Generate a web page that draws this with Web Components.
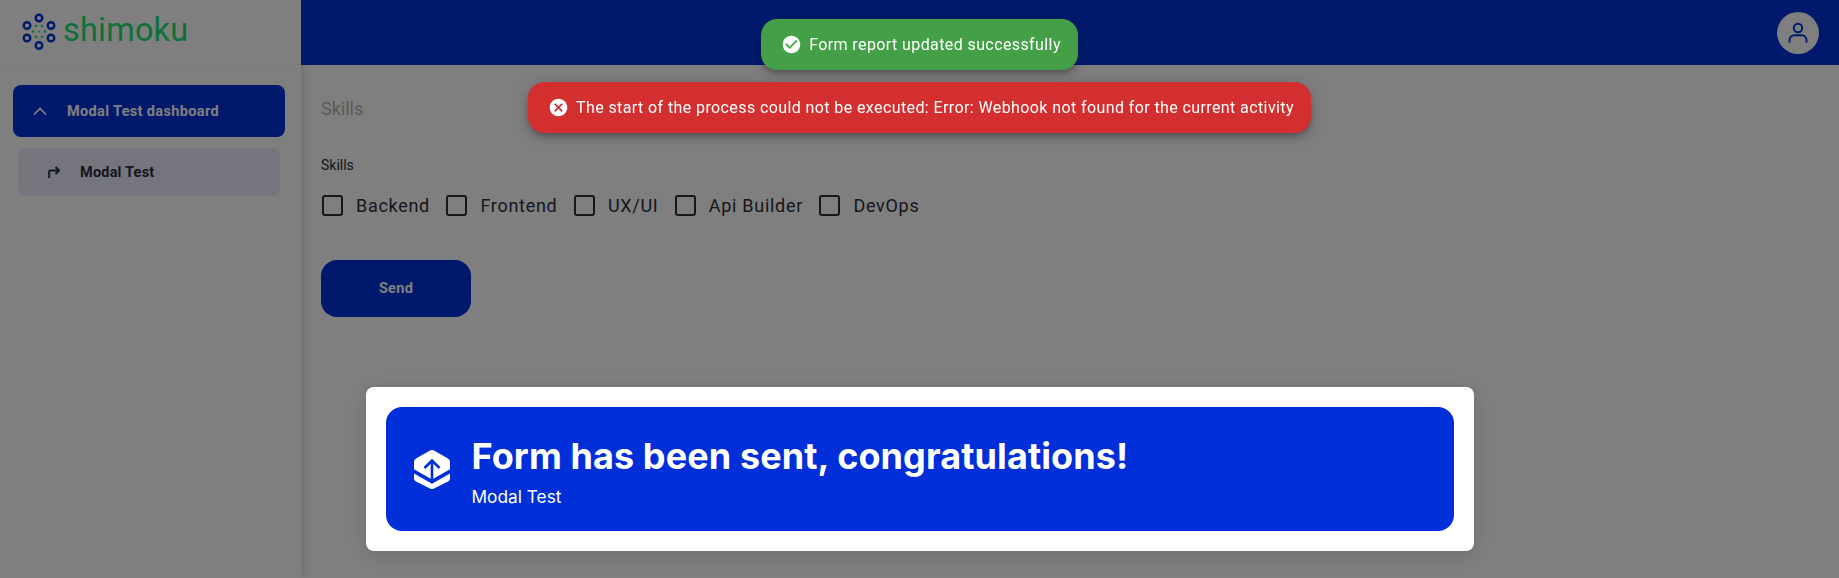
<!DOCTYPE html>
<html>
<head>
<meta charset="utf-8">
<title>Modal Test</title>
<style>
    html, body { margin: 0; height: 100%; overflow: hidden; background: #fff; }
    body { font-family: Roboto, "Liberation Sans", sans-serif; }
</style>
</head>
<body>
<app-shell>
    <shimoku-logo slot="logo"></shimoku-logo>
    <nav-group slot="nav" label="Modal Test dashboard">
        <nav-item label="Modal Test"></nav-item>
    </nav-group>
    <skills-form></skills-form>
</app-shell>

<modal-backdrop>
    <result-modal heading="Form has been sent, congratulations!" sub="Modal Test"></result-modal>
</modal-backdrop>

<toast-stack>
    <toast-msg kind="success">Form report updated successfully</toast-msg>
    <toast-msg kind="error">The start of the process could not be executed: Error: Webhook not found for the current activity</toast-msg>
</toast-stack>

<script>
class ShimokuLogo extends HTMLElement {
    constructor() {
        super();
        const root = this.attachShadow({mode: 'open'});
        root.innerHTML = `
        <style>
            :host { display: flex; align-items: center; gap: 7px; }
            span { font: 400 32.5px/1 "Roboto", sans-serif; color: #22e070; letter-spacing: .2px; position: relative; top: -2px; }
            svg { display: block; }
        </style>
        <svg width="34" height="38" viewBox="0 0 34 38" fill="none" stroke="#0033d9" stroke-width="2.4">
            <circle cx="17" cy="5" r="3.3"/>
            <circle cx="5" cy="12.5" r="3.3"/>
            <circle cx="29" cy="12.5" r="3.3"/>
            <circle cx="5" cy="25" r="3.3"/>
            <circle cx="29" cy="25" r="3.3"/>
            <circle cx="17" cy="32.5" r="3.3"/>
            <g fill="#22e070" stroke="none">
                <circle cx="14" cy="13" r="1.3"/><circle cx="20" cy="13" r="1.3"/>
                <circle cx="11" cy="18.5" r="1.3"/><circle cx="23" cy="18.5" r="1.3"/>
                <circle cx="14" cy="24" r="1.3"/><circle cx="20" cy="24" r="1.3"/>
                <circle cx="17" cy="18.5" r="1.1"/>
            </g>
        </svg>
        <span>shimoku</span>`;
    }
}

class NavGroup extends HTMLElement {
    constructor() {
        super();
        const root = this.attachShadow({mode: 'open'});
        root.innerHTML = `
        <style>
            :host { display: block; padding: 20px 16px 0 13px; }
            .head {
                height: 52px; border-radius: 8px; background: #0033d9; color: #fff;
                display: flex; align-items: center; padding-left: 20px; box-sizing: border-box;
                font: 700 14.5px Roboto, sans-serif; letter-spacing: .35px; gap: 20px;
            }
            svg { display: block; }
            .items { padding: 11px 5px 0; }
        </style>
        <div class="head">
            <svg width="14" height="8" viewBox="0 0 14 8" fill="none" stroke="#fff" stroke-width="1.6"><path d="M1 7.5 7 1.5l6 6"/></svg>
            <span>${this.getAttribute('label')}</span>
        </div>
        <div class="items"><slot></slot></div>`;
    }
}

class NavItem extends HTMLElement {
    constructor() {
        super();
        const root = this.attachShadow({mode: 'open'});
        root.innerHTML = `
        <style>
            :host {
                display: flex; align-items: center; height: 48px; border-radius: 8px;
                background: #e8ebfa; color: #2b2e3b; padding-left: 30px; box-sizing: border-box;
                font: 700 14.5px Roboto, sans-serif; letter-spacing: .2px; gap: 20px;
            }
            svg { display: block; }
        </style>
        <svg width="12" height="12" viewBox="0 0 12 12" fill="none" stroke="#2b2e3b" stroke-width="2"><path d="M1.2 12V5.800c0-.8.5-1.300 1.300-1.300h8"/><path d="M7.500 1 11 4.500 7.500 8"/></svg>
        <span>${this.getAttribute('label')}</span>`;
    }
}

class AppShell extends HTMLElement {
    constructor() {
        super();
        const root = this.attachShadow({mode: 'open'});
        root.innerHTML = `
        <style>
            :host { display: grid; grid-template-columns: 301px 1fr; height: 100vh; }
            aside { box-shadow: 2px 0 10px rgba(0,0,0,.14); position: relative; background: #fff; }
            .logo { height: 64px; border-bottom: 1px solid #f4f4f4; display: flex; align-items: center; padding-left: 22px; }
            header { height: 65px; background: #0033d9; display: flex; align-items: center; justify-content: flex-end; padding-right: 20px; }
            .avatar { width: 42px; height: 42px; border-radius: 50%; background: #fff; display: flex; align-items: center; justify-content: center; }
            svg { display: block; }
        </style>
        <aside>
            <div class="logo"><slot name="logo"></slot></div>
            <slot name="nav"></slot>
        </aside>
        <div>
            <header>
                <div class="avatar">
                    <svg width="20" height="22" viewBox="0 0 20 22" fill="none" stroke="#0033d9" stroke-width="2"><circle cx="10" cy="6" r="4.2"/><path d="M1.5 20.5v-2.2c0-3 2.4-5 5-5h7c2.6 0 5 2 5 5v2.2"/></svg>
                </div>
            </header>
            <slot></slot>
        </div>`;
    }
}

class CheckOption extends HTMLElement {
    constructor() {
        super();
        const root = this.attachShadow({mode: 'open'});
        root.innerHTML = `
        <style>
            :host { display: inline-flex; align-items: center; gap: 13px; font: 400 18px Roboto, sans-serif; letter-spacing: .7px; color: #2b2e3b; }
            i { display: block; width: 17px; height: 17px; border: 2px solid #2b2e3b; border-radius: 3px; }
        </style>
        <i></i><span><slot></slot></span>`;
    }
}

class SkillsForm extends HTMLElement {
    constructor() {
        super();
        const root = this.attachShadow({mode: 'open'});
        root.innerHTML = `
        <style>
            :host { display: block; padding: 33px 0 0 21px; }
            h2 { margin: 0 0 0 -1px; font: 400 18px/21px Roboto, sans-serif; color: #b4b4b4; }
            label { display: block; margin: 38px 0 0 -1px; font: 400 14px/16px Roboto, sans-serif; color: #2b2e3b; }
            .opts { display: flex; gap: 16.5px; margin-top: 20px; height: 24px; align-items: center; }
            button {
                display: block; margin: 43px 0 0 -1px; width: 150px; height: 57px; border: 0; border-radius: 16px;
                background: #0033d9; color: #fff; font: 700 14.5px Roboto, sans-serif; letter-spacing: .3px;
            }
        </style>
        <h2>Skills</h2>
        <label>Skills</label>
        <div class="opts">
            <check-option>Backend</check-option>
            <check-option>Frontend</check-option>
            <check-option>UX/UI</check-option>
            <check-option>Api Builder</check-option>
            <check-option>DevOps</check-option>
        </div>
        <button>Send</button>`;
    }
}

class ModalBackdrop extends HTMLElement {
    constructor() {
        super();
        const root = this.attachShadow({mode: 'open'});
        root.innerHTML = `
        <style>
            :host {
                position: fixed; inset: 0; background: rgba(0,0,0,.5);
                display: flex; justify-content: center; align-items: flex-end; padding-bottom: 27px; box-sizing: border-box;
            }
        </style>
        <slot></slot>`;
    }
}

class ResultModal extends HTMLElement {
    constructor() {
        super();
        const root = this.attachShadow({mode: 'open'});
        root.innerHTML = `
        <style>
            :host {
                display: block; width: 1108px; padding: 20px; box-sizing: border-box; background: #fff; border-radius: 8px;
                box-shadow: 0 4px 20px rgba(0,0,0,.15);
            }
            .banner {
                height: 124px; background: #002fd9; border-radius: 16px; color: #fff; box-sizing: border-box;
                display: flex; align-items: center; padding: 4px 0 0 28px; gap: 22px;
            }
            svg { display: block; flex: none; position: relative; top: -2px; }
            h1 { margin: 0; font: 700 36px/44px Inter, sans-serif; letter-spacing: .1px; }
            p { margin: 8px 0 0; font: 400 17.3px/22px Inter, sans-serif; }
        </style>
        <div class="banner">
            <svg width="36" height="39" viewBox="0 0 36 39">
                <path fill="#fff" d="M16 .6a4 4 0 0 1 4 0l14 8a4 4 0 0 1 2 3.4v7.2L18 29.6 0 19.2V12a4 4 0 0 1 2-3.4z"/>
                <path fill="#fff" d="M0 23.4 18 33.8l18-10.4v5.2a3 3 0 0 1-1.500 2.600L20 38.400a4 4 0 0 1-4 0L1.500 31.200A3 3 0 0 1 0 28.600z"/>
                <path fill="none" stroke="#002fd9" stroke-width="2.600" d="M18 30V10.500M10.500 18 18 10.500 25.500 18"/>
            </svg>
            <div>
                <h1>${this.getAttribute('heading')}</h1>
                <p>${this.getAttribute('sub')}</p>
            </div>
        </div>`;
    }
}

class ToastStack extends HTMLElement {
    constructor() {
        super();
        const root = this.attachShadow({mode: 'open'});
        root.innerHTML = `
        <style>
            :host { position: fixed; top: 19px; left: 0; right: 0; display: flex; flex-direction: column; align-items: center; gap: 12px; }
        </style>
        <slot></slot>`;
    }
}

class ToastMsg extends HTMLElement {
    static icons = {
        success: 'M12 2C6.48 2 2 6.48 2 12s4.48 10 10 10 10-4.48 10-10S17.52 2 12 2zm-2 15l-5-5 1.41-1.41L10 14.17l7.59-7.59L19 8l-9 9z',
        error: 'M12 2C6.47 2 2 6.47 2 12s4.47 10 10 10 10-4.47 10-10S17.53 2 12 2zm5 13.59L15.59 17 12 13.41 8.41 17 7 15.59 10.59 12 7 8.41 8.41 7 12 10.59 15.59 7 17 8.41 13.41 12 17 15.59z'
    }
    constructor() {
        super();
        const kind = this.getAttribute('kind');
        const root = this.attachShadow({mode: 'open'});
        root.innerHTML = `
        <style>
            :host {
                display: flex; align-items: center; height: 51px; box-sizing: border-box; padding: 0 17px 0 20px; gap: 7px;
                border-radius: 16px; color: #fff; font: 400 16px Roboto, sans-serif; letter-spacing: .4px;
                background: ${kind == 'error' ? '#d32f2f' : '#43a047'};
                box-shadow: 0 3px 5px -1px rgba(0,0,0,.2), 0 6px 10px 0 rgba(0,0,0,.14), 0 1px 18px 0 rgba(0,0,0,.12);
            }
            svg { display: block; flex: none; }
        </style>
        <svg width="21" height="21" viewBox="0 0 24 24" fill="#fff"><path d="${ToastMsg.icons[kind]}"/></svg>
        <span><slot></slot></span>`;
    }
}

customElements.define('shimoku-logo', ShimokuLogo);
customElements.define('nav-item', NavItem);
customElements.define('nav-group', NavGroup);
customElements.define('app-shell', AppShell);
customElements.define('check-option', CheckOption);
customElements.define('skills-form', SkillsForm);
customElements.define('modal-backdrop', ModalBackdrop);
customElements.define('result-modal', ResultModal);
customElements.define('toast-stack', ToastStack);
customElements.define('toast-msg', ToastMsg);
</script>
</body>
</html>
